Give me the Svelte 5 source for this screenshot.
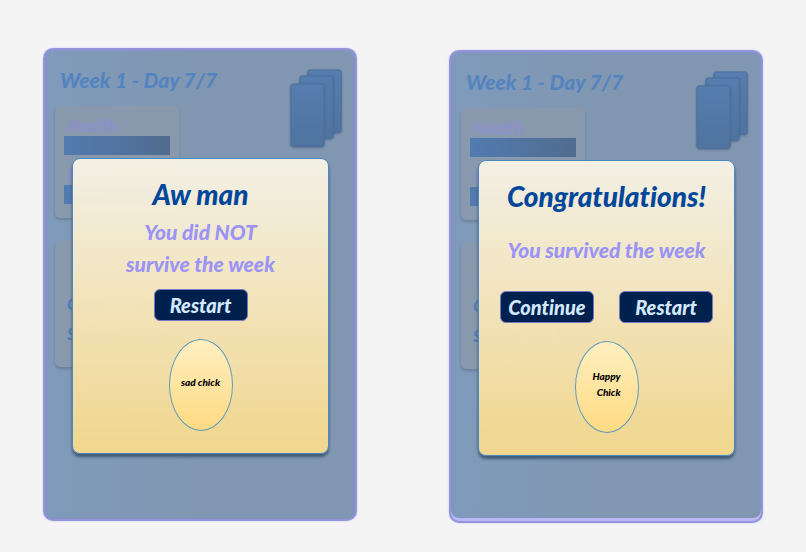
<script lang="ts">
  interface Ending {
    id: string;
    title: string;
    message: string[];
    actions: string[];
    chick: string[];
    won: boolean;
  }

  const week = 1;
  const day = 7;
  const needs = ['Health', 'Food'];
  const funds = ['Cash', 'Savings'];

  const endings: Ending[] = [
    {
      id: 'lost',
      title: 'Aw man',
      message: ['You did NOT', 'survive the week'],
      actions: ['Restart'],
      chick: ['sad chick'],
      won: false
    },
    {
      id: 'won',
      title: 'Congratulations!',
      message: ['You survived the week'],
      actions: ['Continue', 'Restart'],
      chick: ['Happy', 'Chick'],
      won: true
    }
  ];
</script>

<main>
  {#each endings as ending (ending.id)}
    <section class="phone" class:won={ending.won}>
      <div class="game">
        <header>
          <h1>Week {week} - Day {day}/7</h1>
          <svg class="deck" width="58" height="84" viewBox="0 0 58 84" aria-hidden="true">
            <defs>
              <linearGradient id="card-{ending.id}" x1="0" y1="0" x2="0" y2="1">
                <stop offset="0" stop-color="#557dae" />
                <stop offset="1" stop-color="#50739f" />
              </linearGradient>
            </defs>
            <g fill="url(#card-{ending.id})" stroke="#4c719e">
              <rect class="card" x="21" y="4" width="33" height="62" rx="2" />
              <rect class="card" x="13" y="10" width="33" height="62" rx="2" />
              <rect class="card" x="4" y="18" width="33" height="62" rx="2" />
            </g>
          </svg>
        </header>

        <div class="panel needs">
          {#each needs as need}
            <div>
              <h2>{need}</h2>
              <div class="bar"></div>
            </div>
          {/each}
        </div>

        <div class="panel wallet">
          <h2>Wallet</h2>
          <dl>
            {#each funds as fund}
              <dt>{fund}</dt>
              <dd>$---</dd>
            {/each}
          </dl>
        </div>
      </div>

      <div class="overlay">
        <div class="modal" role="dialog" aria-labelledby="title-{ending.id}">
          <h2 id="title-{ending.id}">{ending.title}</h2>
          <p class="message">
            {#each ending.message as line}
              <span>{line}</span>
            {/each}
          </p>
          <div class="actions">
            {#each ending.actions as action}
              <button type="button">{action}</button>
            {/each}
          </div>
          <div class="chick">
            <p>
              {#each ending.chick as line}
                <span>{line}</span>
              {/each}
            </p>
          </div>
        </div>
      </div>
    </section>
  {/each}
</main>

<style>
  :global(body) {
    margin: 0;
    background: #f4f4f4;
  }

  main {
    display: grid;
    grid-template-columns: 1fr 1fr;
    align-items: start;
    gap: 92px;
    padding: 48px 43px 30px;
    font-family: Lato, 'Open Sans', sans-serif;
    font-style: italic;
    font-weight: 900;
    font-variant-ligatures: none;
  }
  h1,
  h2,
  p,
  dl,
  dd {
    margin: 0;
    font-weight: 900;
  }
  span {
    display: block;
  }

  /* the board and the dialog share one grid cell */
  .phone {
    display: grid;
    border: 2px solid #9494dc;
    border-radius: 10px;
    background: linear-gradient(90deg, #7f9abb, #8197b1 50%);
    box-shadow:
      0 0 2px #c4c4f4,
      inset 0 0 4px #8c90cc;
  }
  .phone.won {
    margin-top: 2px;
    box-shadow:
      0 0 2px #c4c4f4,
      inset 0 -3px 0 #b8b9f6,
      inset 0 0 4px #8c90cc;
  }
  .game,
  .overlay {
    grid-area: 1 / 1;
    min-width: 0;
  }

  .game {
    padding: 16px 10px;
  }
  header {
    display: flex;
    justify-content: space-between;
    height: 40px;
    padding-left: 5px;
  }
  h1 {
    font-size: 21px;
    line-height: 28px;
    color: #5484c0;
    white-space: nowrap;
  }
  .deck {
    flex: none;
  }
  .card {
    filter: drop-shadow(0 1px 1px #4a6488);
  }

  .panel {
    border-radius: 5px;
    background: #8899ad;
    box-shadow: 0 2px 3px #6a809c;
  }
  .panel h2 {
    padding-left: 4px;
    color: #8d8fcb;
  }
  .needs {
    display: grid;
    box-sizing: border-box;
    width: 124px;
    height: 112px;
    padding: 9px;
    align-content: start;
    gap: 9px;
  }
  .needs h2 {
    font-size: 17px;
    line-height: 21px;
  }
  .bar {
    height: 19px;
    background: linear-gradient(90deg, #527bb0, #516c8f);
  }
  .wallet {
    box-sizing: border-box;
    height: 126px;
    margin: 23px 18px 0 0;
    padding: 12px;
  }
  .wallet h2 {
    font-size: 24px;
    line-height: 26px;
  }
  dl {
    display: grid;
    grid-template-columns: 72px 1fr;
    margin-top: 10px;
    font-size: 16px;
    line-height: 30px;
    color: #4f7eb6;
  }
  dd {
    padding-left: 8px;
    border-left: 1px solid #7489a5;
  }

  .overlay {
    padding: 108px 26px 65px 27px;
  }
  .modal {
    display: flex;
    flex-direction: column;
    align-items: center;
    box-sizing: border-box;
    height: 296px;
    padding: 18px 8px 22px;
    border: 1px solid #4a88c4;
    border-radius: 8px;
    background: linear-gradient(rgba(247, 243, 231, 0.96), rgba(244, 216, 140, 0.97));
    box-shadow: 0 3px 3px #3f5a78;
    text-align: center;
  }
  .modal h2 {
    font-size: 28px;
    line-height: 34px;
    color: #00479c;
    white-space: nowrap;
  }
  .message {
    display: grid;
    align-content: center;
    flex: 1;
    padding-top: 4px;
    font-size: 21px;
    line-height: 32px;
    color: #9b93f8;
    white-space: nowrap;
  }
  .actions {
    display: flex;
    justify-content: center;
    gap: 25px;
    margin: 8px 0 18px;
  }
  button {
    width: 94px;
    height: 32px;
    padding: 0;
    border: 1px solid #7478c4;
    border-radius: 6px;
    background: #00204d;
    color: #d3e9ff;
    font: inherit;
    font-size: 20px;
    line-height: 30px;
    cursor: pointer;
  }
  .chick {
    display: grid;
    place-items: center;
    box-sizing: border-box;
    width: 64px;
    height: 92px;
    padding-bottom: 6px;
    border: 1px solid #5e9abf;
    border-radius: 50%;
    background: linear-gradient(#ffefc0, #ffda82);
  }
  .chick p {
    font-size: 10px;
    line-height: 16px;
    color: #000;
    text-align: right;
  }
</style>
